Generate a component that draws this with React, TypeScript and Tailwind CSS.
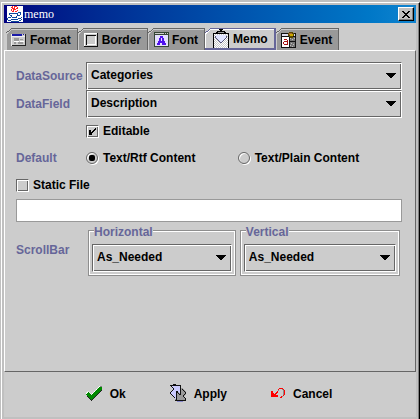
import React from "react";

const flush =
  "border border-t-[#666] border-l-[#666] border-r-white border-b-white shadow-[inset_1px_1px_0_#fff,inset_-1px_-1px_0_#666]";

function JavaIcon() {
  return (
    <svg width="16" height="16" viewBox="0 0 16 16" shapeRendering="crispEdges" className="bg-white" aria-hidden="true">
      <path d="M5 0h1v1H5zM7 0h3v1H7zM4 1h2v1H4zM7 1h1v1H7zM10 1h1v2h-1zM5 2h3v1H5zM9 2h1v1H9zM4 3h1v2H4zM6 3h3v1H6zM10 4h1v1h-1zM6 4h1v2H6zM8 5h2v1H8zM5 5h1v1H5z" fill="#f22" />
      <path d="M2 7h3v1H2zM2 8h1v1H2zM3 9h2v1H3zM5 7h6v1H5zM11 6h3v1h-3zM13 7h1v2h-1zM11 9h2v1h-2zM4 10h1v1H4zM10 8h1v2h-1zM5 11h5v1H5zM9 10h1v1H9zM1 11h3v1H1zM0 12h1v2H0zM1 14h3v1H1zM4 13h7v1H4zM11 12h3v1h-3zM14 11h1v1h-1zM4 15h8v1H4zM12 14h2v1h-2zM14 13h1v1h-1z" fill="#124a9a" />
    </svg>
  );
}

function FormatIcon() {
  return (
    <svg width="16" height="14" viewBox="0 0 16 14" shapeRendering="crispEdges" aria-hidden="true">
      <path d="M1 1h14v12H1z" fill="#ccc" />
      <path d="M0 1h1v12H0zM1 3h13v1H1z" fill="#eee" />
      <path d="M1 1h10v2H1z" fill="#1a1aa8" />
      <path d="M12 1h1v1h-1z" fill="#1a1aa8" />
      <path d="M14 1h1v12h-1zM1 12h14v1H1z" fill="#222" />
      <path d="M3 5h5v3H3zM3 9h2v2H3zM7 9h5v2H7zM9 6h3v1H9z" fill="#999" />
      <path d="M3 8h5v1H3zM9 8h4v1H9z" fill="#fff" />
    </svg>
  );
}

function BorderIcon() {
  return (
    <svg width="14" height="14" viewBox="0 0 14 14" shapeRendering="crispEdges" aria-hidden="true">
      <path d="M0 0h14v14H0z" fill="#111" />
      <path d="M0 0h13v1H1v12H0z" fill="#fff" />
      <path d="M1 1h12v12H1z" fill="#ccc" />
      <path d="M2 2h10v10H2z" fill="#111" />
      <path d="M3 3h9v9H3z" fill="#fff" />
      <path d="M3 3h8v8H3z" fill="#ccc" />
    </svg>
  );
}

function FontIcon() {
  return (
    <svg width="15" height="15" viewBox="0 0 15 15" shapeRendering="crispEdges" aria-hidden="true">
      <path d="M0 0h15v15H0z" fill="#354535" />
      <path d="M1 1h13v1H1z" fill="#ccc" />
      <path d="M10 1h1v1h-1zM12 1h1v1h-1z" fill="#354535" />
      <path d="M1 3h13v11H1z" fill="#e4e0ff" />
      <path d="M6 4h3v2h1v3h1v2h1v2H8v-2H6v2H3v-2h1V9h1V6h1zM7 6v3h1V6z" fill="#5010ee" fillRule="evenodd" />
    </svg>
  );
}

function MemoIcon() {
  const dots: React.ReactElement[] = [];
  for (let y = 5; y < 19; y++)
    for (let x = 1 + (y % 2); x < 15; x += 2)
      dots.push(<rect key={`${x}-${y}`} x={x} y={y} width="1" height="1" fill="#c8c8c8" />);
  return (
    <svg width="16" height="19" viewBox="0 0 16 19" shapeRendering="crispEdges" aria-hidden="true">
      <path d="M0 4h16v15H0z" fill="#000" />
      <path d="M1 5h14v14H1z" fill="#fff" />
      {dots}
      <path d="M3 6h10v3L8 14 3 9z" fill="#e0e4ff" />
      <path d="M2 7h1v2H2zM3 9h1v1H3zM4 10h1v1H4zM5 11h1v1H5zM6 12h1v1H6zM7 13h2v1H7zM9 12h1v1H9zM10 11h1v1h-1zM11 10h1v1h-1zM12 9h1v1h-1zM13 7h1v2h-1z" fill="#557" />
      <path d="M6 0h4v1H6zM7 1h2v1H7zM4 2h8v1H4zM3 3h2v2H3zM11 3h2v2h-2z" fill="#000" />
      <path d="M5 3h6v1H5z" fill="#999" />
    </svg>
  );
}

function EventIcon() {
  return (
    <svg width="15" height="16" viewBox="0 0 15 16" shapeRendering="crispEdges" aria-hidden="true">
      <path d="M0 1h15v15H0z" fill="#111" />
      <path d="M1 2h13v2H1z" fill="#dde" />
      <path d="M1 5h7v10H1z" fill="#fff" />
      <path d="M3 7h3v1H3zM6 8h1v5H6zM3 9h3v1H3zM2 10h1v2H2zM3 12h4v1H3z" fill="#a11" />
      <path d="M9 5h5v4H9zM9 10h5v5H9z" fill="#777" />
      <path d="M9 6h1v1H9zM11 7h1v1h-1zM13 6h1v1h-1zM10 11h1v1h-1zM12 12h1v1h-1zM9 13h1v1H9zM11 14h1v1h-1z" fill="#bbb" />
      <path d="M8 0h4v1h1v3h-1v2H9V5H8V4H7V1h1z" fill="#5a4a00" />
      <path d="M8 1h3v2H8z" fill="#a63" />
      <path d="M9 2h3v2H9z" fill="#ca0" />
    </svg>
  );
}

function CheckIcon() {
  return (
    <svg width="17" height="15" viewBox="0 0 17 15" shapeRendering="crispEdges" aria-hidden="true">
      <path d="M0 7L3 5L5 8L13 0H16V2L6 12L0 8Z" fill="#fff" />
      <path d="M1 9L5 13L16 2V4L6 15H5L1 11Z" fill="#222" />
      <path d="M0 8L3 6L5 9L13 1H16V3L6 13.500H5L0 9Z" fill="#080" />
      <path d="M14 0h2v1h-2z" fill="#888" />
      <path d="M1 5h2v1H1zM0 6h1v1H0zM3 6h1v1H3zM4 7h1v1H4zM5 8h1v1H5zM7 6h1v1H7zM9 4h1v1H9zM11 2h1v1h-1z" fill="#dfe8df" />
    </svg>
  );
}

function ApplyIcon() {
  return (
    <svg width="17" height="19" viewBox="0 0 17 19" shapeRendering="crispEdges" aria-hidden="true">
      <path d="M11 4h2l3 4v2l-3 3 3 3v1H5V9l2-2 4 4z" fill="#999" />
      <path d="M1 2h10v9L7 7 6 8v8L2 12 0 10V9l3-3z" fill="#ccf" />
      <path d="M3 0h3v1H3zM0 1h11v1H0zM10 1h1v10h-1zM9 10h1v1H9zM8 9h1v1H8zM7 7h1v2H7zM6 7h1v9H6zM1 2h1v1H1zM2 3h1v1H2zM3 4h1v2H3zM2 6h1v1H2zM1 7h1v1H1zM0 8h1v2H0zM1 10h1v1H1zM2 11h1v1H2zM3 12h1v1H3zM4 13h1v1H4zM5 16h11v1H5zM12 5h1v1h-1zM13 6h1v1h-1zM14 7h1v1h-1zM15 8h1v2h-1zM14 10h1v1h-1zM13 11h1v2h-1zM14 13h1v1h-1zM15 14h1v3h-1z" fill="#111" />
      <path d="M7 17h6v1H7z" fill="#88c" />
    </svg>
  );
}

function UndoIcon() {
  return (
    <svg width="15" height="12" viewBox="0 0 15 12" shapeRendering="crispEdges" aria-hidden="true">
      <path d="M7 2h1v1H7zM11 1h1v1h-1zM12 2h1v6h-1zM11 8h1v1h-1z" fill="#888" />
      <path d="M0 3h2v2h1v1h1V5h1V4h1V3h1v2H6v1H5v1h2v2H0zM7 1h1v1H7zM8 0h4v1H8zM12 1h1v1h-1zM13 2h1v5h-1zM12 7h1v1h-1zM10 8h1v1h-1zM9 9h2v1H9z" fill="#f00" />
    </svg>
  );
}

function Tab({ label, icon, active = false }: { label: string; icon: React.ReactNode; active?: boolean }) {
  return (
    <button
      type="button"
      role="tab"
      aria-selected={active}
      className={`relative flex h-[22px] items-center pt-px pr-1.5 ${
        active ? "gap-1 border-r-2 border-b-2 border-[#669] bg-[#ccc] pl-2" : "gap-[3px] border-r border-[#666] bg-[#999] pl-[5px]"
      }`}
    >
      <svg className="absolute top-0 left-0 h-full w-full" aria-hidden="true" shapeRendering="crispEdges">
        <path d="M0 0H5L0 5Z" fill="#ccc" />
        <path d="M0 5.5L5.500 0.500H200" fill="none" stroke={active ? "#669" : "#666"} />
        <path d="M0.500 22V6L5.500 1.500H200" fill="none" stroke={active ? "#fff" : "#ccc"} />
      </svg>
      <span className="relative flex w-4 justify-center">{icon}</span>
      <span className="relative">{label}</span>
    </button>
  );
}

function Combo({ id, value, label }: { id: string; value: string; label?: string }) {
  return (
    <div className="relative min-w-0 flex-1">
      <select id={id} aria-label={label} className={`block h-7 w-full appearance-none bg-[#ccc] pr-6 pb-0.5 pl-1 ${flush}`}>
        <option>{value}</option>
      </select>
      <svg className="pointer-events-none absolute top-[11px] right-1.5" width="10" height="5" viewBox="0 0 10 5" shapeRendering="crispEdges" aria-hidden="true">
        <path d="M0 0h10v1H0zM1 1h8v1H1zM2 2h6v1H2zM3 3h4v1H3zM4 4h2v1H4z" />
      </svg>
    </div>
  );
}

function Tick({ label, checked = false }: { label: string; checked?: boolean }) {
  return (
    <label className="flex h-4 items-center gap-1">
      <span className="relative h-[13px] w-[13px]">
        <input type="checkbox" defaultChecked={checked} className={`peer block h-[13px] w-[13px] appearance-none ${flush}`} />
        <svg className="pointer-events-none absolute top-[3px] left-[3px] hidden peer-checked:block" width="7" height="7" viewBox="0 0 7 7" shapeRendering="crispEdges" aria-hidden="true">
          <path d="M0 2h2v5H0zM2 4h1v3H2zM3 3h1v2H3zM4 2h1v2H4zM5 1h1v2H5zM6 0h1v2H6z" />
        </svg>
      </span>
      {label}
    </label>
  );
}

function Choice({ label, checked = false }: { label: string; checked?: boolean }) {
  return (
    <label className="flex h-4 items-center gap-1 whitespace-nowrap">
      <span className="relative h-[13px] w-[13px]">
        <input type="radio" name="content" defaultChecked={checked} className="peer block h-3 w-3 appearance-none rounded-full border border-[#666] shadow-[1px_1px_0_#fff,inset_1px_1px_0_#fff]" />
        <span className="pointer-events-none absolute top-[3px] left-[3px] hidden h-1.5 w-1.5 rounded-xs bg-black peer-checked:block" />
      </span>
      {label}
    </label>
  );
}

function Group({ title, id }: { title: string; id: string }) {
  return (
    <fieldset className="relative min-w-0 pt-5 pb-1">
      <div className="pointer-events-none absolute inset-x-0 top-1.5 bottom-0 border border-[#8e8e8e] shadow-[inset_0_0_0_1px_#fff]" />
      <legend className="absolute top-0 left-1.5 h-4 bg-[#ccc] text-[#669]">{title}</legend>
      <div className="flex px-1">
        <Combo id={id} value="As_Needed" label={title} />
      </div>
    </fieldset>
  );
}

function Action({ label, icon }: { label: string; icon: React.ReactNode }) {
  return (
    <button type="button" className="flex items-center gap-[7px]">
      {icon}
      {label}
    </button>
  );
}

export default function App() {
  return (
    <div className="flex min-h-screen flex-col bg-[#c0c0c0] pt-0.5 pl-px font-['Liberation_Sans',Arial,sans-serif] text-[12px] leading-4 font-bold text-black">
      <div className="flex flex-1 flex-col border-t border-r border-l border-t-white border-r-black border-l-white">
        <div className="flex flex-1 flex-col border-r border-[#808080] pt-0.5 pr-0.5 pb-0.5 pl-0.5">
          <header className="flex h-[18px] items-center bg-linear-to-r from-[#000080] to-[#1084d0] pr-0.5 pl-[3px]">
            <JavaIcon />
            <h1 className="ml-px flex-1 font-['Liberation_Serif',serif] text-[12px] font-normal text-white">memo</h1>
            <button type="button" aria-label="Close" className="flex h-3.5 w-4 items-center justify-center border border-t-white border-r-black border-b-black border-l-white bg-[#c0c0c0] shadow-[inset_-1px_-1px_0_#808080]">
              <svg width="8" height="7" viewBox="0 0 8 7" shapeRendering="crispEdges" aria-hidden="true">
                <path d="M0 0h2v1H0zM6 0h2v1H6zM1 1h2v1H1zM5 1h2v1H5zM2 2h4v1H2zM3 3h2v1H3zM2 4h4v1H2zM1 5h2v1H1zM5 5h2v1H5zM0 6h2v1H0zM6 6h2v1H6z" />
              </svg>
            </button>
          </header>
          <main className="flex flex-1 flex-col bg-[#ccc] pt-[5px]">
            <div role="tablist" className="flex pl-0.5">
              <Tab label="Format" icon={<FormatIcon />} />
              <Tab label="Border" icon={<BorderIcon />} />
              <Tab label="Font" icon={<FontIcon />} />
              <Tab label="Memo" icon={<MemoIcon />} active />
              <Tab label="Event" icon={<EventIcon />} />
            </div>
            <section className="flex flex-1 flex-col border border-t-white border-r-[#666] border-b-[#666] border-l-white pt-[11px] pr-[13px] pl-[11px]">
              <div className="flex items-center">
                <label htmlFor="source" className="w-[70px] text-[#669]">DataSource</label>
                <Combo id="source" value="Categories" />
              </div>
              <div className="flex items-center">
                <label htmlFor="field" className="w-[70px] text-[#669]">DataField</label>
                <Combo id="field" value="Description" />
              </div>
              <div className="mt-[5px] pl-[70px]">
                <Tick label="Editable" checked />
              </div>
              <div role="radiogroup" aria-label="Default" className="mt-[11px] flex items-center">
                <span className="w-[70px] text-[#669]">Default</span>
                <div className="grid flex-1 grid-cols-[12fr_13fr]">
                  <Choice label="Text/Rtf Content" checked />
                  <Choice label="Text/Plain Content" />
                </div>
              </div>
              <div className="mt-[11px]">
                <Tick label="Static File" />
              </div>
              <input type="text" aria-label="Static file path" className="mt-1.5 h-[23px] w-full border border-[#999] bg-white px-1" />
              <div className="mt-0.5 flex items-center pr-0.5">
                <span className="w-[72px] text-[#669]">ScrollBar</span>
                <div className="grid min-w-0 flex-1 grid-cols-[12fr_13fr] gap-1">
                  <Group title="Horizontal" id="horizontal" />
                  <Group title="Vertical" id="vertical" />
                </div>
              </div>
            </section>
            <footer className="flex h-[45px] items-center justify-center gap-11 pr-0.5 pb-0.5">
              <Action label="Ok" icon={<CheckIcon />} />
              <Action label="Apply" icon={<ApplyIcon />} />
              <Action label="Cancel" icon={<UndoIcon />} />
            </footer>
          </main>
        </div>
      </div>
    </div>
  );
}
